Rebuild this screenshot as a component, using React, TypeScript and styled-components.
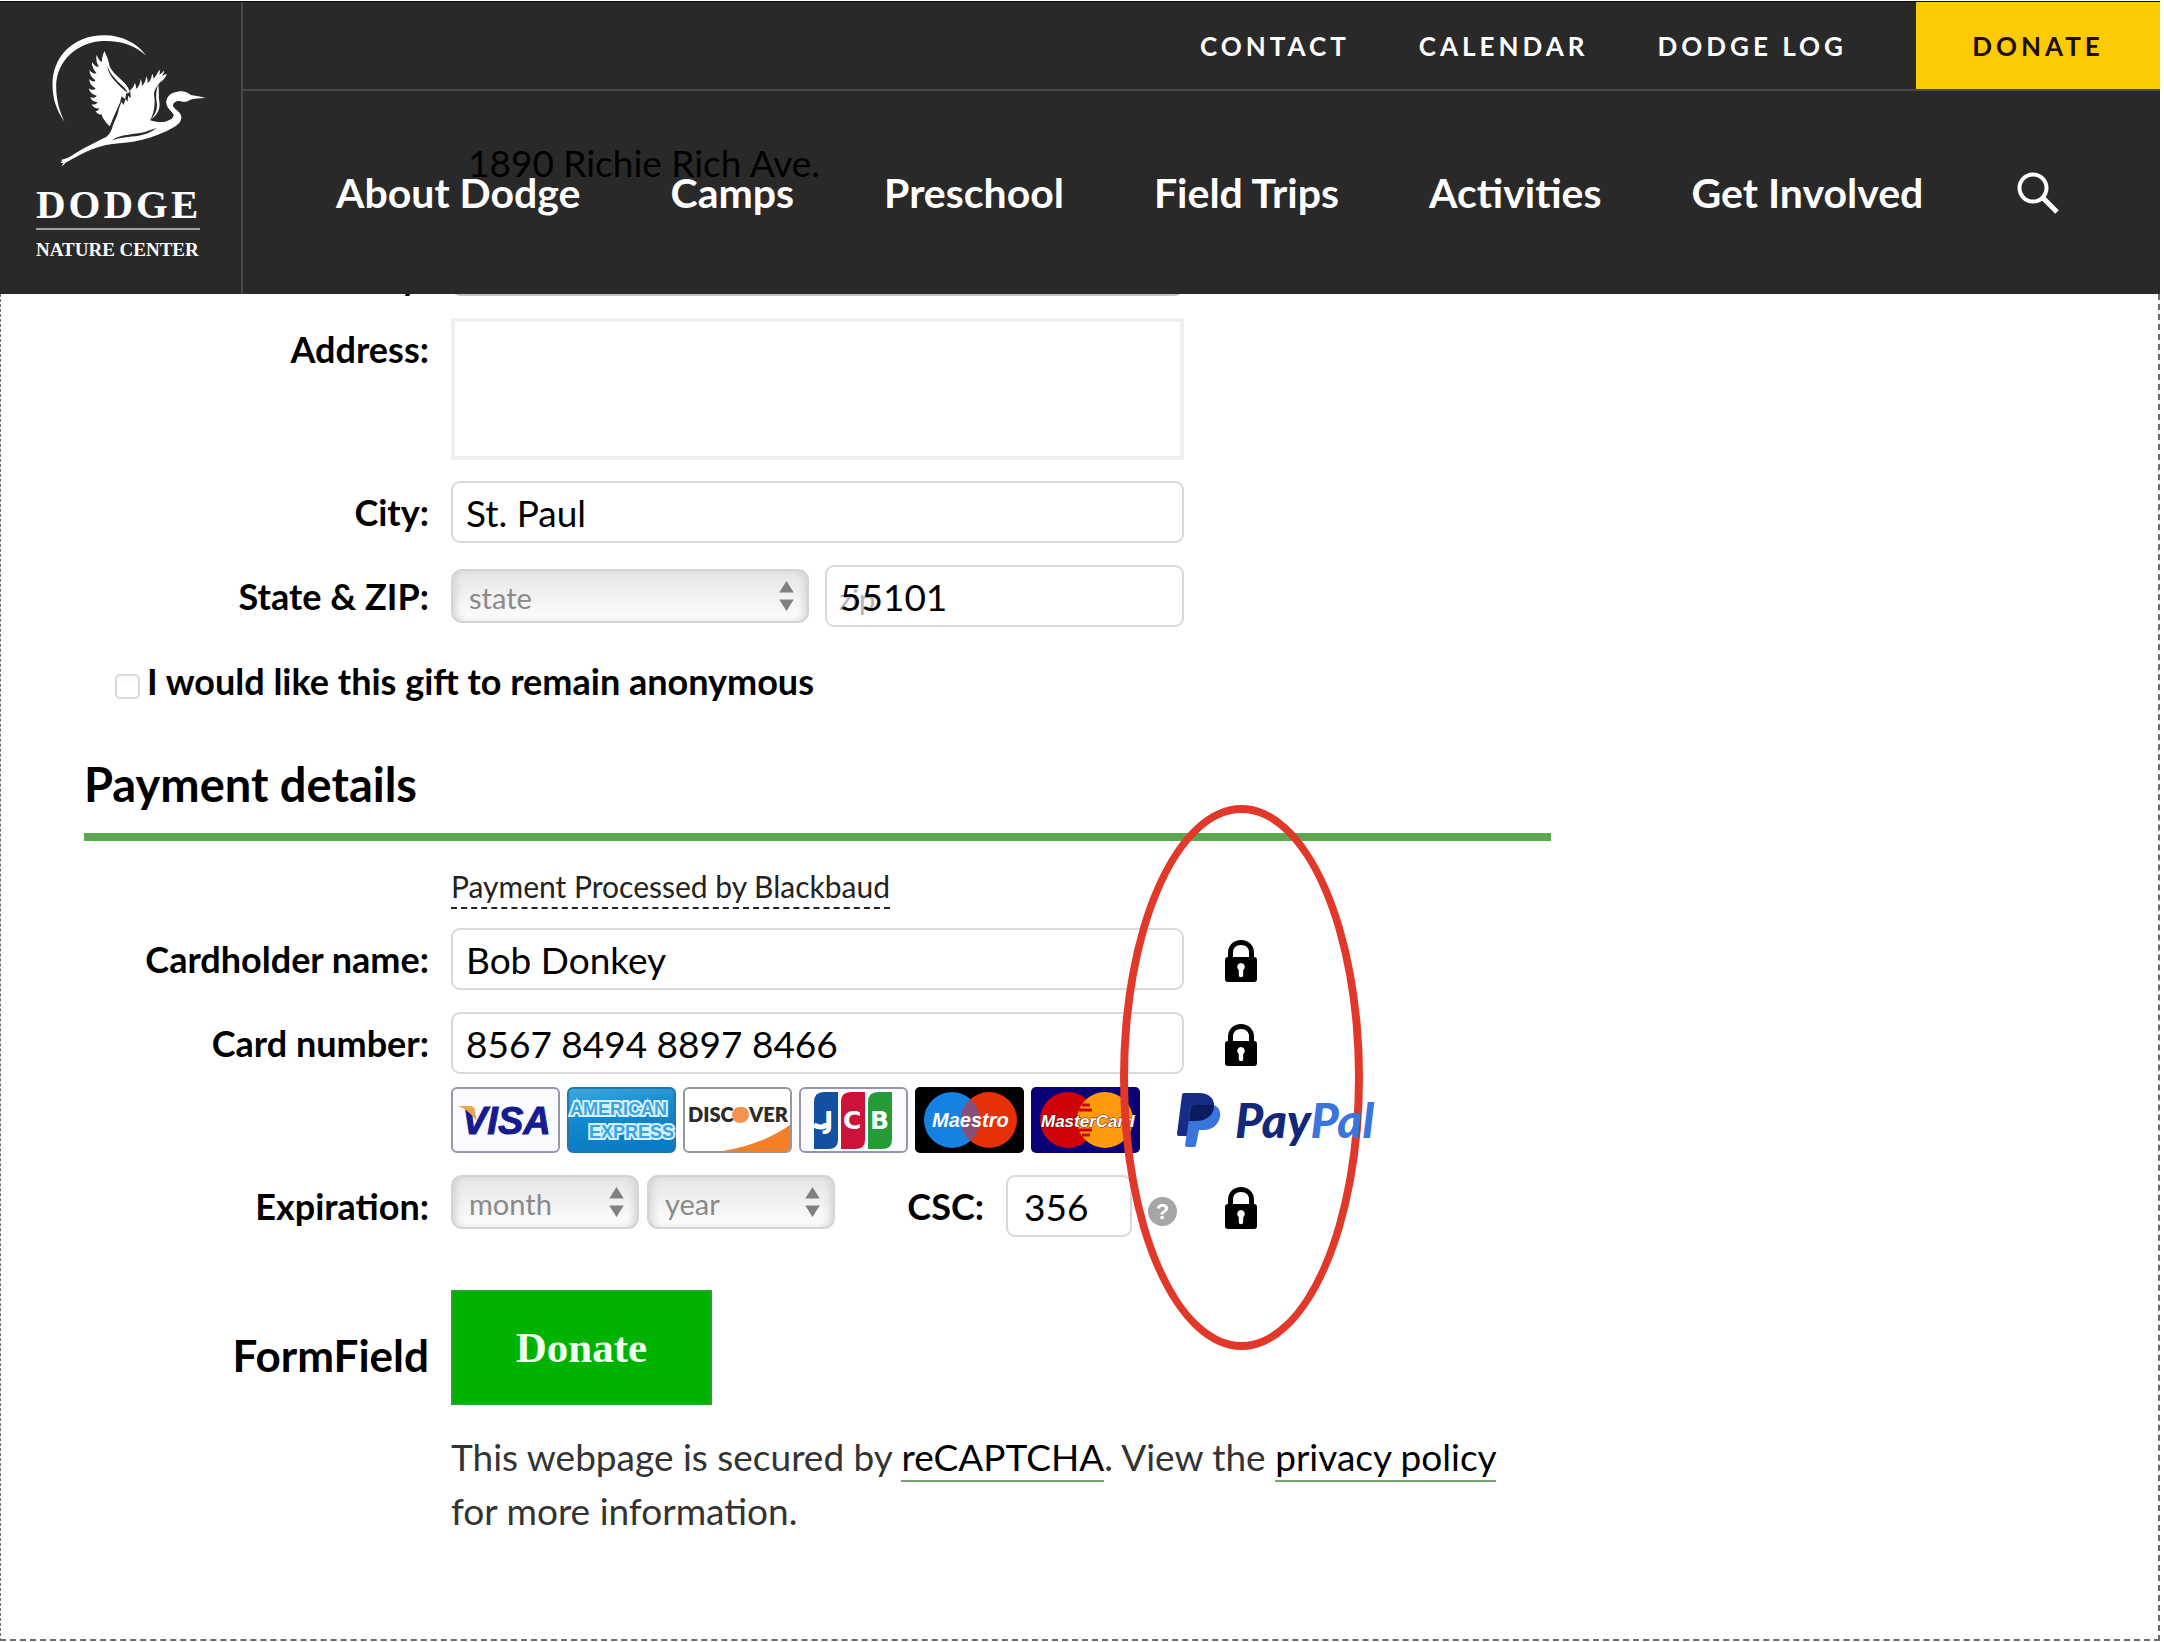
import React from "react";
import styled, { createGlobalStyle, css } from "styled-components";

const sans = `Lato, "Open Sans", sans-serif`;
const serif = `"Liberation Serif", serif`;

const GlobalStyle = createGlobalStyle`
  *, *::before, *::after { box-sizing: border-box; }
  body { margin: 0; background: #fff; font-family: ${sans}; color: #000; }
`;

const Page = styled.div`
  display: flex;
  flex-direction: column;
  min-height: calc(100vh - 1px);
  padding: 1px 4px 0 0;
`;

/* ---------- header ---------- */

const Header = styled.header`
  position: relative;
  z-index: 3;
  display: flex;
  background: #292929;
  border-top: 1px solid #0c0c0c;
`;

const LogoLink = styled.a`
  flex: none;
  width: 243px;
  padding: 31px 41px 0 36px;
  border-right: 2px solid #484848;
  color: #fff;
  font-family: ${serif};
  font-weight: 700;
  text-decoration: none;
`;

const Heron = styled.svg`
  display: block;
  width: 157px;
  height: 135px;
  margin: 0 0 15px 14px;
  fill: #fff;
`;

const LogoName = styled.span`
  display: block;
  padding-bottom: 3px;
  border-bottom: 2px solid #a0a0a0;
  font-size: 41px;
  line-height: 42px;
  letter-spacing: 3px;
  white-space: nowrap;
`;

const LogoTag = styled.span`
  display: block;
  margin-top: 8px;
  font-size: 19px;
  line-height: 24px;
  white-space: nowrap;
`;

const HeaderBars = styled.div`
  flex: 1;
  min-width: 0;
`;

const TopBar = styled.nav`
  display: flex;
  justify-content: flex-end;
  align-items: center;
  gap: 69px;
  height: 89px;
  border-bottom: 2px solid #484848;
`;

const TopLink = styled.a<{ $accent?: boolean }>`
  color: #fff;
  font-size: 26px;
  font-weight: 700;
  line-height: 32px;
  letter-spacing: 4px;
  text-decoration: none;
  white-space: nowrap;
  ${(p) =>
    p.$accent &&
    css`
      display: flex;
      align-items: center;
      justify-content: center;
      align-self: stretch;
      width: 244px;
      background: #fccb04;
      color: #1c0d00;
    `}
`;

const MainNav = styled.nav`
  position: relative;
  display: flex;
  align-items: center;
  gap: 90px;
  height: 203px;
  padding-left: 93px;
`;

const NavLink = styled.a`
  position: relative;
  z-index: 1;
  color: #fff;
  font-size: 41px;
  font-weight: 700;
  line-height: 50px;
  text-decoration: none;
  white-space: nowrap;
`;

const StreetText = styled.span`
  position: absolute;
  left: 225px;
  top: 50px;
  font-size: 37px;
  line-height: 44px;
  white-space: nowrap;
`;

const SearchButton = styled.button`
  display: flex;
  margin-left: 4px;
  padding: 0;
  border: 0;
  background: none;
  color: #fff;
`;

/* ---------- form ---------- */

const Main = styled.main`
  display: flex;
  flex: 1;
  flex-direction: column;
  border: dashed #6b6b6b;
  border-width: 0 2px 2px 1px;
`;

const Form = styled.form`
  display: flex;
  flex-direction: column;
  width: 100%;
  max-width: 1550px;
  margin-top: -49px;
  padding-left: 83px;
`;

const Row = styled.div<{ $before?: number }>`
  display: flex;
  align-items: flex-start;
  margin-top: ${(p) => p.$before ?? 21}px;
`;

const Label = styled.label`
  flex: none;
  width: 345px;
  margin-right: 22px;
  font-size: 36px;
  font-weight: 700;
  line-height: 62px;
  text-align: right;
`;

const ActionLabel = styled(Label)`
  padding-top: 34px;
  font-size: 44px;
`;

const InlineLabel = styled(Label)`
  width: auto;
  margin-left: auto;
`;

const Field = styled.div<{ $align?: string }>`
  display: flex;
  flex: 0 1 733px;
  align-items: ${(p) => p.$align ?? "flex-start"};
  min-width: 0;
`;

const Offset = styled.div`
  display: flex;
  flex-direction: column;
  align-items: flex-start;
  margin-left: 367px;
`;

const TextInput = styled.input`
  width: 100%;
  min-width: 0;
  height: 62px;
  padding: 0 13px;
  border: 2px solid #d9d9d9;
  border-radius: 9px;
  background: transparent;
  color: #000;
  font: 400 37px ${sans};
`;

const ShortInput = styled(TextInput)`
  height: 51px;
  border-color: #c4c4c4;
`;

const CscInput = styled(TextInput)`
  flex: none;
  width: 126px;
  padding: 0 16px;
`;

const TextArea = styled.textarea`
  width: 100%;
  height: 142px;
  border: 4px solid #efefef;
  background: #fff;
  font: 400 37px ${sans};
  resize: none;
`;

const ZipBox = styled.div`
  position: relative;
  flex: 1;
  min-width: 0;
  margin-left: 16px;
`;

const ZipHint = styled.span`
  position: absolute;
  left: 14px;
  top: 14px;
  color: #b3b3b3;
  font-size: 29px;
  line-height: 40px;
`;

const ZipInput = styled(TextInput)`
  position: relative;
`;

const SelectBox = styled.div<{ $wide?: boolean }>`
  position: relative;
  flex: none;
  width: ${(p) => (p.$wide ? 358 : 188)}px;
  & + & { margin-left: 8px; }
`;

const SelectControl = styled.select`
  display: block;
  width: 100%;
  height: 54px;
  padding: 2px 40px 0 16px;
  border: 2px solid #d4d4d4;
  border-radius: 11px;
  background: linear-gradient(#e6e6e6, #efefef 40%, #fdfdfd);
  box-shadow: inset 6px 0 8px -4px #cfcfcf, inset -6px 0 8px -4px #cfcfcf;
  color: #8a8a8a;
  font: 400 29px ${sans};
  appearance: none;
`;

const SelectArrows = styled.svg`
  position: absolute;
  top: 12px;
  right: 15px;
  width: 15px;
  height: 30px;
  fill: #808080;
  pointer-events: none;
`;

const CheckRow = styled.div`
  display: flex;
  align-items: flex-start;
  gap: 7px;
  margin: 32px 0 0 31px;
`;

const CheckBox = styled.input`
  width: 25px;
  height: 25px;
  margin: 15px 0 0;
  border: 2px solid #dadada;
  border-radius: 5px;
  background: linear-gradient(#f8f8f8, #fff 40%);
  appearance: none;
`;

const CheckLabel = styled.label`
  font-size: 36px;
  font-weight: 700;
  line-height: 44px;
`;

const Payment = styled.section`
  position: relative;
  margin-top: 53px;
`;

const SectionTitle = styled.h2`
  margin: 0;
  padding-bottom: 21px;
  border-bottom: 8px solid #5ba850;
  font-size: 47px;
  font-weight: 700;
  line-height: 56px;
`;

const ProcessorLink = styled.a`
  margin-top: 27px;
  padding-bottom: 3px;
  border-bottom: 2px dashed #222;
  color: #222;
  font-size: 30px;
  line-height: 36px;
  text-decoration: none;
`;

const LockIcon = styled.svg`
  flex: none;
  width: 32px;
  height: 42px;
  margin: 12px 0 0 41px;
`;

const CardList = styled.div`
  display: flex;
  align-items: center;
  gap: 7px;
`;

const CardArt = styled.svg`
  display: block;
  width: 109px;
  height: 66px;
`;

const PayPalMark = styled.span`
  position: relative;
  z-index: 2;
  display: flex;
  align-items: center;
  gap: 14px;
  margin-left: 30px;
  color: #14287a;
  font-size: 48px;
  font-style: italic;
  font-weight: 900;
  line-height: 54px;
`;

const PayPalTail = styled.span`
  color: #3a75dd;
`;

const PayPalIcon = styled.svg`
  width: 44px;
  height: 54px;
`;

const HelpButton = styled.button`
  flex: none;
  width: 29px;
  height: 29px;
  margin: 22px 7px 0 16px;
  padding: 0;
  border: 0;
  border-radius: 50%;
  background: #a6a6a6;
  color: #fff;
  font: 700 22px/29px "Liberation Sans", sans-serif;
`;

const Highlight = styled.div`
  position: absolute;
  z-index: 1;
  left: 1036px;
  top: 49px;
  width: 243px;
  height: 545px;
  border: 8px solid #e13829;
  border-radius: 50%;
  pointer-events: none;
`;

const DonateButton = styled.button`
  width: 261px;
  height: 115px;
  padding: 0;
  border: 2px solid #22a822;
  background: #00b300;
  color: #f0fff0;
  font: 700 43px ${serif};
`;

const Notice = styled.p`
  max-width: 1070px;
  margin: 25px 0 50px 367px;
  color: #333;
  font-size: 37px;
  line-height: 54px;
`;

const NoticeLink = styled.a`
  padding-bottom: 1px;
  border-bottom: 2px solid #74a56c;
  color: #000;
  text-decoration: none;
`;

/* ---------- drawings ---------- */

const HeronLogo = () => (
  <Heron viewBox="60 40 470 405" aria-hidden="true">
    <path d="M103 306C78 270 67 235 67 195C67 110 130 47 222 47C275 47 320 70 348 108C315 78 275 63 222 64C140 66 79 125 78 198C78 240 88 275 103 306Z" />
    <path d="M223 94C228 106 236 122 238 138C246 160 270 175 283 190C290 198 297 207 299 218L288 222L285 238L274 230L270 248C260 270 250 292 239 320C228 310 218 298 214 284C208 286 200 282 196 275C202 275 206 272 206 266C196 268 188 262 184 254C192 256 199 254 202 247C192 248 184 242 180 233C188 236 196 234 200 228C188 226 179 218 176 206C184 212 192 212 196 206C184 200 178 190 177 178C184 186 192 188 196 182C184 174 178 164 178 150C184 160 192 164 199 160C190 150 185 140 185 127C192 137 198 142 206 141C199 130 197 117 199 105C204 116 208 124 215 127C215 114 218 104 223 94Z" />
    <path d="M300 212C306 206 312 200 314 190C318 196 318 204 317 208C326 202 331 190 331 178C336 186 336 194 334 200C344 192 348 180 348 170C353 178 353 184 352 190C362 184 364 172 366 162C370 168 370 174 369 178C378 170 382 158 388 150C390 155 389 160 387 165C394 162 398 155 402 153C402 160 398 165 395 168C401 168 404 163 410 163C407 174 398 182 390 188C378 202 370 215 372 228C375 250 374 275 360 302C376 308 392 308 405 306C422 302 432 294 430 284C427 276 408 266 408 246C410 228 424 218 442 216C460 213 472 218 482 226C497 228 512 231 526 234C508 236 492 236 480 240C470 247 462 248 452 245C440 242 430 248 428 257C430 268 448 274 453 288C456 302 446 314 432 322C400 340 370 352 336 360C305 368 275 370 246 373C215 377 190 386 165 398C140 410 120 422 108 428C104 432 100 437 94 441L100 429L91 430L96 424L92 421C106 418 118 412 128 406C158 386 200 366 228 352C240 342 244 332 248 318C254 302 262 290 266 268L274 246L280 256L286 238L292 246L294 228L302 236Z" />
    <path d="M384 194C388 215 384 232 388 250C390 272 378 290 362 299C376 284 382 268 380 250C376 230 378 212 384 194Z" />
    <path fill="#292929" d="M245 363C262 346 300 345 330 340C350 336 364 330 380 325C364 338 346 344 326 348C296 352 268 352 245 363Z" />
    <path fill="#292929" d="M232 138C236 158 256 178 270 192C282 202 290 210 293 220C288 216 272 205 258 188C244 172 232 156 232 138Z" />
  </Heron>
);

const Lock = () => (
  <LockIcon viewBox="0 0 32 42" role="img" aria-label="Secure field">
    <path d="M5.500 20V13C5.500 6.500 10 2.500 16 2.500S26.500 6.500 26.500 13V20" fill="none" stroke="#000" strokeWidth="5" />
    <rect y="17" width="32" height="25" rx="3" />
    <path d="M16 23a4 4 0 0 1 2.200 7.200V35a2 2 0 0 1-4.400 0V30.200A4 4 0 0 1 16 23Z" fill="#fff" />
  </LockIcon>
);

const Select = ({ id, text, wide, label }: { id: string; text: string; wide?: boolean; label?: string }) => (
  <SelectBox $wide={wide}>
    <SelectControl id={id} aria-label={label}>
      <option>{text}</option>
    </SelectControl>
    <SelectArrows viewBox="0 0 15 31" aria-hidden="true">
      <path d="M7.500 0L15 12H0ZM7.500 31L0 19H15Z" />
    </SelectArrows>
  </SelectBox>
);

const liberation = { fontFamily: "Liberation Sans, sans-serif", fontWeight: 700 };

const Cards = () => (
  <>
    <CardArt viewBox="0 0 109 66" role="img" aria-label="Visa">
      <rect x="1" y="1" width="107" height="64" rx="5" fill="#fbfbff" stroke="#9696ac" strokeWidth="2" />
      <text x="11" y="47" fontSize="38" fontStyle="italic" fill="#161b90" stroke="#161b90" {...liberation}>VISA</text>
      <path d="M7 19H19C22 19 24 21 24 24L26 35C22 28 15 22 7 19Z" fill="#eba54a" />
    </CardArt>
    <CardArt viewBox="0 0 109 66" role="img" aria-label="American Express">
      <defs>
        <linearGradient id="amex" x1="0" y1="0" x2="0.300" y2="1">
          <stop offset="0" stopColor="#3fa9e0" />
          <stop offset="0.500" stopColor="#1489cf" />
          <stop offset="1" stopColor="#087cc4" />
        </linearGradient>
      </defs>
      <rect x="1" y="1" width="107" height="64" rx="5" fill="url(#amex)" stroke="#1f78ae" strokeWidth="2" />
      <g fill="#3ba3df" stroke="#d4f1ff" strokeWidth="4" paintOrder="stroke" {...liberation}>
        <text x="3" y="28" fontSize="18">AMERICAN</text>
        <text x="22" y="51" fontSize="18">EXPRESS</text>
      </g>
    </CardArt>
    <CardArt viewBox="0 0 109 66" role="img" aria-label="Discover">
      <rect x="1" y="1" width="107" height="64" rx="5" fill="#fff" />
      <path d="M107 38V60Q107 64 103 64H40Q78 58 107 38Z" fill="#f57f26" />
      <rect x="1" y="1" width="107" height="64" rx="5" fill="none" stroke="#99979c" strokeWidth="2" />
      <text x="5" y="35" fontSize="20" fontFamily="Lato, sans-serif" fontWeight="800" fill="#2d2a2a">
        DISC<tspan fill="#f3924a">O</tspan>VER
      </text>
      <circle cx="57" cy="28" r="8" fill="#f3924a" />
    </CardArt>
    <CardArt viewBox="0 0 109 66" role="img" aria-label="JCB">
      <rect x="1" y="1" width="107" height="64" rx="5" fill="#fbfbff" stroke="#9696ac" strokeWidth="2" />
      <path d="M15 15Q15 5 25 5H39V53Q39 62 29 62H15Z" fill="#1350a0" />
      <path d="M42 15Q42 5 52 5H66V53Q66 62 56 62H42Z" fill="#cc1238" />
      <path d="M69 15Q69 5 79 5H93V53Q93 62 83 62H69Z" fill="#259b38" />
      <path d="M15 38C20 41 27 41 27 36" fill="none" stroke="#fff" strokeWidth="5" />
      <g fill="#fff" fontSize="25" fontFamily="DejaVu Sans, sans-serif" fontWeight="700">
        <text x="25" y="42">J</text>
        <text x="44" y="42">C</text>
        <text x="71" y="42">B</text>
      </g>
    </CardArt>
    <CardArt viewBox="0 0 109 66" role="img" aria-label="Maestro">
      <rect width="109" height="66" rx="5" fill="#000" />
      <circle cx="37" cy="33" r="28" fill="#1581e0" />
      <circle cx="74" cy="33" r="28" fill="#e63008" />
      <path d="M55.500 12A28 28 0 0 1 55.500 54A28 28 0 0 1 55.500 12Z" fill="#87507a" />
      <text x="17" y="40" fontSize="20" fontStyle="italic" fill="#fff" {...liberation}>Maestro</text>
    </CardArt>
    <CardArt viewBox="0 0 109 66" role="img" aria-label="MasterCard">
      <rect width="109" height="66" rx="5" fill="#0a0078" />
      <circle cx="37" cy="33" r="28" fill="#cf0408" />
      <circle cx="74" cy="33" r="28" fill="#fd9b0c" />
      <path d="M51 18H59M48 23H61M48 43H61M51 48H59" stroke="#cf0408" strokeWidth="3" />
      <text x="10" y="40" fontSize="17" fontStyle="italic" fill="#fff" stroke="#5a1020" strokeWidth="1" paintOrder="stroke" {...liberation}>MasterCard</text>
    </CardArt>
  </>
);

const PayPal = () => (
  <PayPalMark>
    <PayPalIcon viewBox="0 0 44 54" aria-hidden="true">
      <path d="M7 0H22C32 0 38 6 37 14C36 24 28 28 19 28H14L11 43H2Q0 43 0 41L5 2Q5 0 7 0Z" fill="#162c86" />
      <path d="M17 12H37C42 14 44 19 43 24C41 33 34 37 27 37H22L19 52Q19 54 17 54H10Q8 54 8 52L14 14Q15 12 17 12Z" fill="#3a75dd" />
      <path d="M17 12H37C37.500 22 29 28 19 28H12L14 14Q15 12 17 12Z" fill="#0a1c5e" />
    </PayPalIcon>
    <span>Pay<PayPalTail>Pal</PayPalTail></span>
  </PayPalMark>
);

const mainLinks = ["About Dodge", "Camps", "Preschool", "Field Trips", "Activities", "Get Involved"];
const topLinks = ["CONTACT", "CALENDAR", "DODGE LOG"];

export default function App() {
  return (
    <Page>
      <GlobalStyle />
      <Header>
        <LogoLink href="#home">
          <HeronLogo />
          <LogoName>DODGE</LogoName>
          <LogoTag>NATURE CENTER</LogoTag>
        </LogoLink>
        <HeaderBars>
          <TopBar>
            {topLinks.map((text) => (
              <TopLink key={text} href="#top">{text}</TopLink>
            ))}
            <TopLink href="#donate" $accent>DONATE</TopLink>
          </TopBar>
          <MainNav>
            <StreetText>1890 Richie Rich Ave.</StreetText>
            {mainLinks.map((text) => (
              <NavLink key={text} href="#nav">{text}</NavLink>
            ))}
            <SearchButton type="button" aria-label="Search">
              <svg width="42" height="42" viewBox="0 0 42 42" fill="none" stroke="currentColor">
                <circle cx="16" cy="16" r="13.500" strokeWidth="4" />
                <path d="M26 26L40 40" strokeWidth="5" />
              </svg>
            </SearchButton>
          </MainNav>
        </HeaderBars>
      </Header>

      <Main>
        <Form onSubmit={(e) => e.preventDefault()}>
          <Row $before={0}>
            <Label htmlFor="country">Country:</Label>
            <Field><ShortInput id="country" /></Field>
          </Row>
          <Row $before={11}>
            <Label htmlFor="address">Address:</Label>
            <Field><TextArea id="address" /></Field>
          </Row>
          <Row>
            <Label htmlFor="city">City:</Label>
            <Field><TextInput id="city" defaultValue="St. Paul" /></Field>
          </Row>
          <Row $before={22}>
            <Label htmlFor="state">State &amp; ZIP:</Label>
            <Field $align="center">
              <Select id="state" text="state" wide />
              <ZipBox>
                <ZipHint>zip</ZipHint>
                <ZipInput aria-label="ZIP" defaultValue="55101" />
              </ZipBox>
            </Field>
          </Row>
          <CheckRow>
            <CheckBox type="checkbox" id="anonymous" />
            <CheckLabel htmlFor="anonymous">I would like this gift to remain anonymous</CheckLabel>
          </CheckRow>

          <Payment>
            <SectionTitle>Payment details</SectionTitle>
            <Offset>
              <ProcessorLink href="#processor">Payment Processed by Blackbaud</ProcessorLink>
            </Offset>
            <Row $before={19}>
              <Label htmlFor="holder">Cardholder name:</Label>
              <Field><TextInput id="holder" defaultValue="Bob Donkey" /></Field>
              <Lock />
            </Row>
            <Row $before={22}>
              <Label htmlFor="number">Card number:</Label>
              <Field><TextInput id="number" defaultValue="8567 8494 8897 8466" /></Field>
              <Lock />
            </Row>
            <Row $before={13}>
              <Offset>
                <CardList>
                  <Cards />
                  <PayPal />
                </CardList>
              </Offset>
            </Row>
            <Row $before={22}>
              <Label htmlFor="month">Expiration:</Label>
              <Field>
                <Select id="month" text="month" />
                <Select id="year" text="year" label="Expiration year" />
                <InlineLabel htmlFor="csc">CSC:</InlineLabel>
                <CscInput id="csc" defaultValue="356" />
                <HelpButton type="button">?</HelpButton>
              </Field>
              <Lock />
            </Row>
            <Highlight />
          </Payment>

          <Row $before={53}>
            <ActionLabel htmlFor="donate">FormField</ActionLabel>
            <DonateButton id="donate" type="submit">Donate</DonateButton>
          </Row>
          <Notice>
            This webpage is secured by <NoticeLink href="#recaptcha">reCAPTCHA</NoticeLink>. View the{" "}
            <NoticeLink href="#privacy">privacy policy</NoticeLink> for more information.
          </Notice>
        </Form>
      </Main>
    </Page>
  );
}
